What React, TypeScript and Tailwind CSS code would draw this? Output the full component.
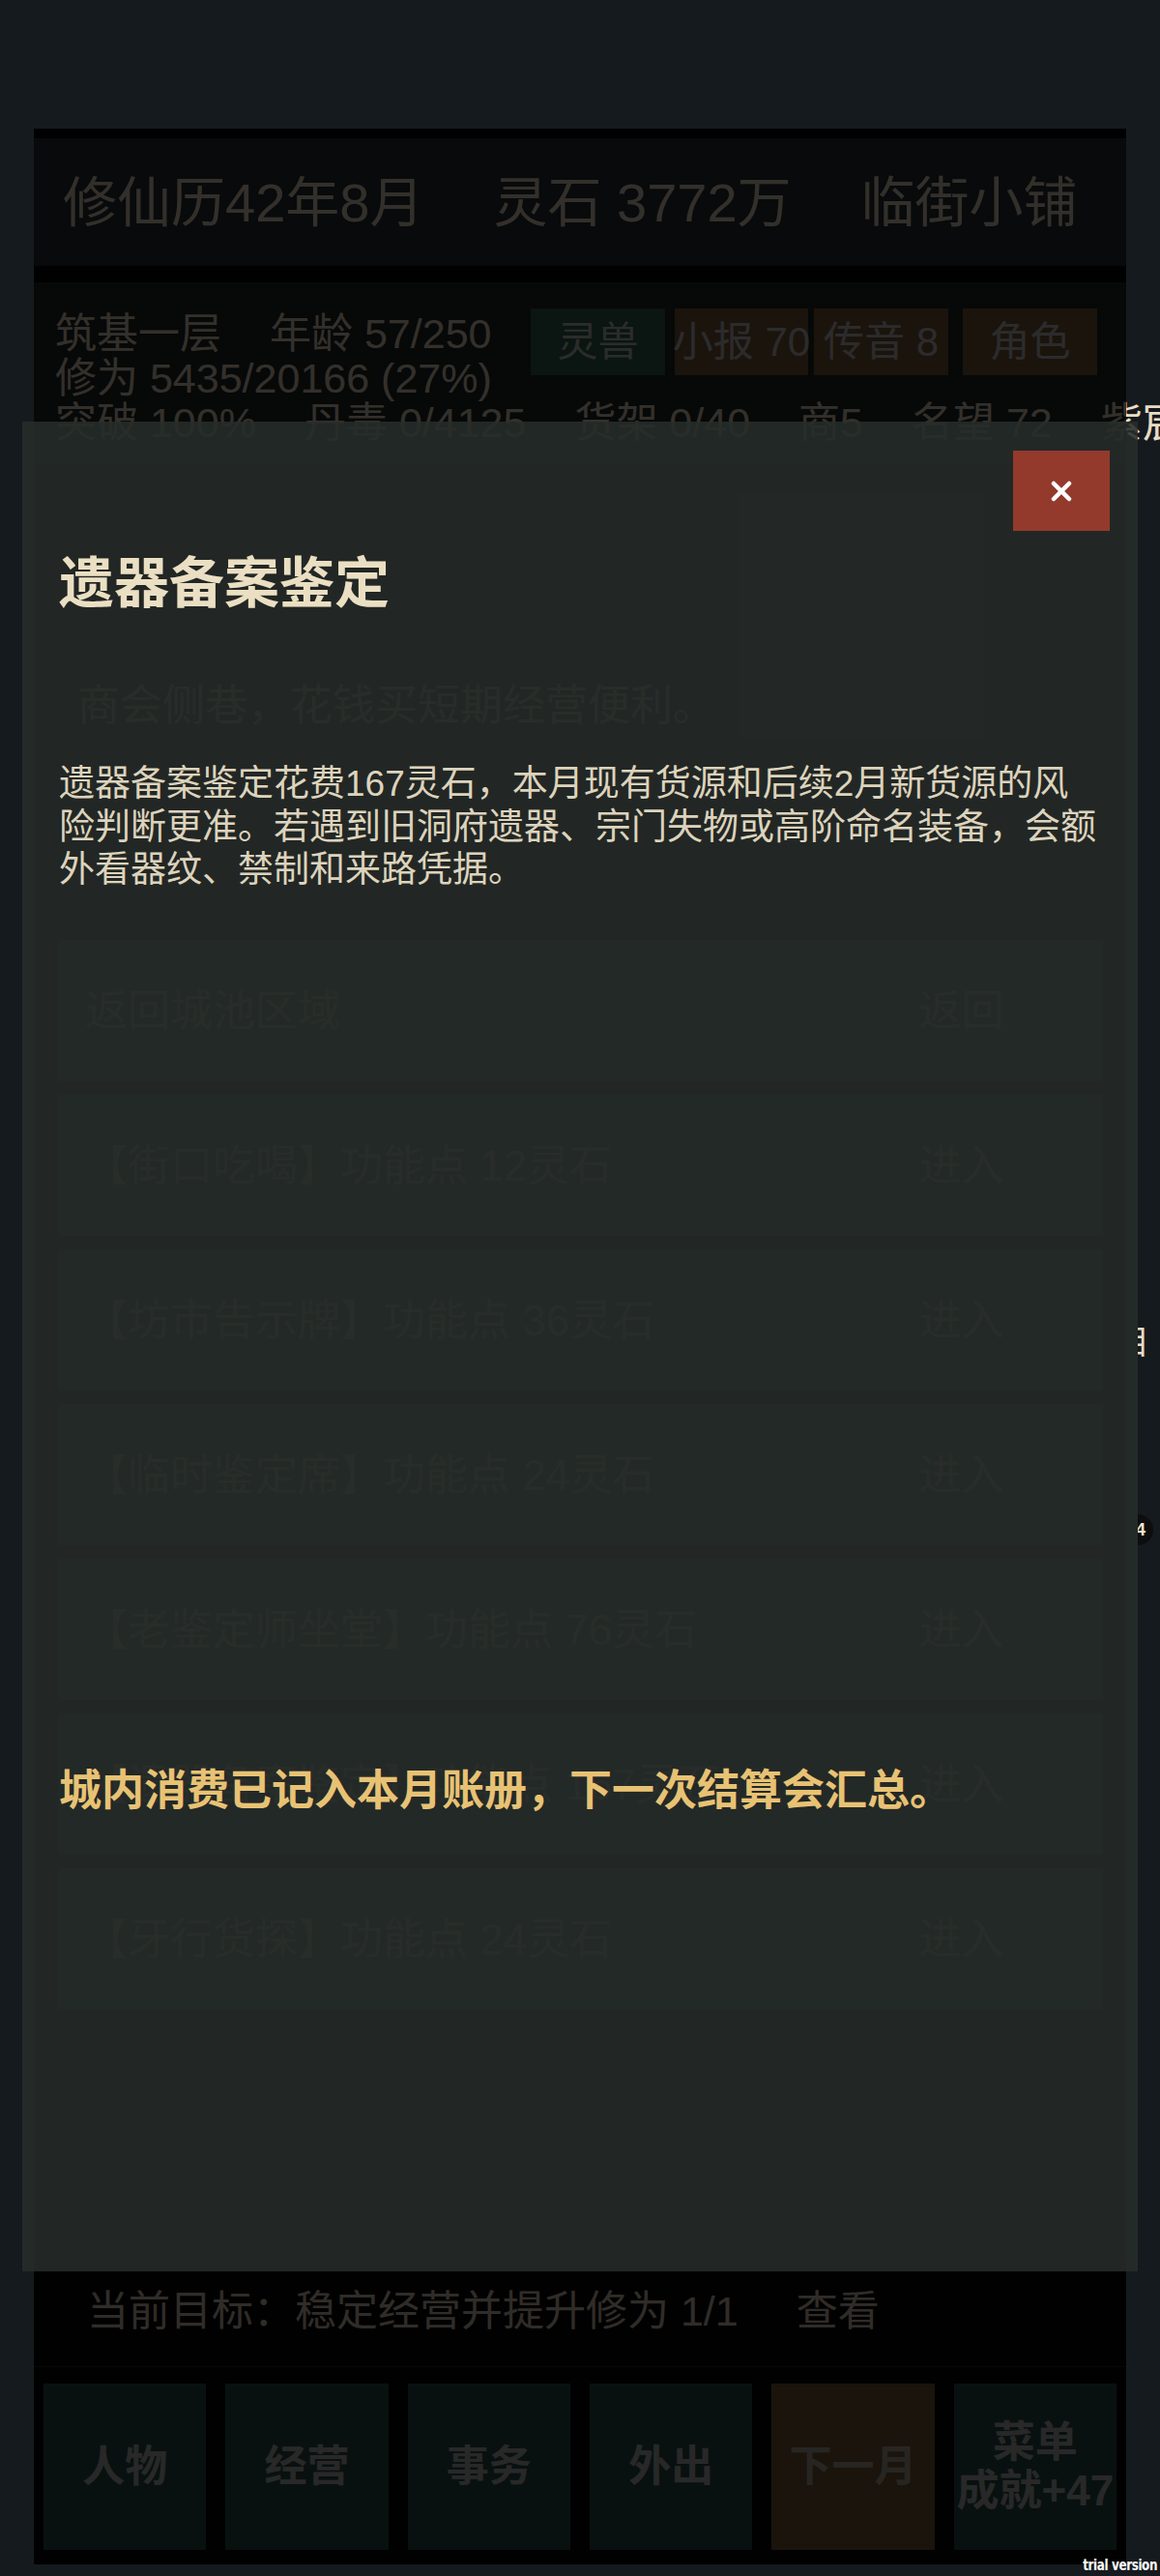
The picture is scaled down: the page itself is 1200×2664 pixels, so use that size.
import React from "react";

const rows = [
  { label: "返回城池区域", action: "返回" },
  { label: "【街口吃喝】功能点 12灵石", action: "进入" },
  { label: "【坊市告示牌】功能点 36灵石", action: "进入" },
  { label: "【临时鉴定席】功能点 24灵石", action: "进入" },
  { label: "【老鉴定师坐堂】功能点 76灵石", action: "进入" },
  { label: "【遗器备案鉴定】功能点 167灵石", action: "进入" },
  { label: "【牙行货探】功能点 24灵石", action: "进入" },
];

const stats = ["突破 100%", "丹毒 0/4125", "货架 0/40", "商5", "名望 72", "紫宸"];

export default function App() {
  return (
    <div className="relative w-[1200px] h-[2664px] overflow-hidden bg-[#151a1e] pt-[133px] font-['Liberation_Sans','Noto_Sans_CJK_SC',sans-serif]">
      {/* page under the dialog */}
      <div className="relative mx-[35px] h-[2519px] bg-[#080808] pt-[10px] flex flex-col">
        <header className="h-[132px] flex-none bg-[#283034] px-[30px] flex items-center gap-[72px] whitespace-nowrap text-[56px] leading-[67px] text-[#e8d4c0]">
          <span>修仙历42年8月</span>
          <span>灵石 3772万</span>
          <span>临街小铺</span>
        </header>

        <section className="mt-[17px] flex-none bg-[#202828] px-[22px] pt-[27px] pb-[20px] text-[43px] leading-[46px] text-[#e8dcc4]">
          <div className="flex items-start">
            <div className="mt-[3px] w-[470px] flex-none whitespace-nowrap">
              <div className="flex gap-[50px]">
                <span>筑基一层</span>
                <span>年龄 57/250</span>
              </div>
              <div>修为 5435/20166 (27%)</div>
            </div>
            <div className="ml-[22px] flex whitespace-nowrap text-[42px]">
              <div className="w-[139px] h-[69px] flex items-center justify-center bg-[#346050] text-[#c0c8c4]">
                灵兽
              </div>
              <div className="ml-[10px] w-[138px] h-[69px] flex items-center justify-center bg-[#785c3c] text-[#c8c4c8]">
                小报 70
              </div>
              <div className="ml-[6px] w-[139px] h-[69px] flex items-center justify-center bg-[#785c3c] text-[#c8c4c8]">
                传音 8
              </div>
              <div className="ml-[15px] w-[139px] h-[69px] flex items-center justify-center bg-[#785c3c] text-[#c8c4c8]">
                角色
              </div>
            </div>
          </div>
          <div className="flex gap-[50px] whitespace-nowrap">
            {stats.map((s) => (
              <span key={s}>{s}</span>
            ))}
          </div>
        </section>

        <div className="flex-1 px-[25px]">
          <p className="mt-[223px] pl-[20px] text-[44px] leading-[53px] text-[#e8dcc4] whitespace-nowrap">
            商会侧巷，花钱买短期经营便利。
          </p>
          <div className="mt-[216px] flex flex-col gap-[14px]">
            {rows.map((r) => (
              <div
                key={r.label}
                className="w-[1081px] h-[146px] flex items-center justify-between bg-[#3a4a4a] pl-[28px] pr-[30px] text-[44px] leading-[53px] text-[#e8dcc4] whitespace-nowrap"
              >
                <span>{r.label}</span>
                <span className="w-[233px] h-[82px] flex items-center justify-center bg-[#34484a]">
                  {r.action}
                </span>
              </div>
            ))}
          </div>
        </div>

        <div className="flex-none pt-[18px] pl-[55px] flex gap-[60px] whitespace-nowrap text-[43px] leading-[50px] text-[#d8c8b8]">
          <span>当前目标：稳定经营并提升修为 1/1</span>
          <span>查看</span>
        </div>
        <div className="mt-[32px] flex-none border-t border-dotted border-[#3c3c3c]" />

        <nav className="flex-none grid grid-cols-6 gap-[20px] px-[10px] pt-[17px] pb-[15px] text-[44px] leading-[50px] font-bold text-center">
          <div className="h-[172px] flex items-center justify-center bg-[#2c5048] text-[#b4b8b4]">人物</div>
          <div className="h-[172px] flex items-center justify-center bg-[#2c5048] text-[#b4b8b4]">经营</div>
          <div className="h-[172px] flex items-center justify-center bg-[#2c5048] text-[#b4b8b4]">事务</div>
          <div className="h-[172px] flex items-center justify-center bg-[#2c5048] text-[#b4b8b4]">外出</div>
          <div className="h-[172px] flex items-center justify-center bg-[#7c5c38] text-[#b0a89c]">下一月</div>
          <div className="h-[172px] flex flex-col items-center justify-center bg-[#2c5048] text-[#b4b8b4] whitespace-nowrap">
            <span>菜单</span>
            <span>成就+47</span>
          </div>
        </nav>

        {/* dim layer over the page */}
        <div className="absolute inset-0 z-10 bg-black/[0.78]" />
      </div>

      {/* side bits sticking out past the dialog */}
      <div className="absolute left-[1177px] top-[1371px] w-[8px] h-[36px] overflow-hidden">
        <span className="block -ml-[22px] text-[34px] leading-none text-[#e8dcc4]">目</span>
      </div>
      <div className="absolute left-[1177px] top-[1566px] w-[18px] h-[32px] overflow-hidden">
        <span className="block -ml-[20px] w-fit h-[32px] rounded-full bg-[#0c0e0f] px-[8px] text-[18px] leading-[32px] font-bold text-[#f0e6d0]">
          14
        </span>
      </div>

      {/* dialog */}
      <div className="absolute left-[23px] top-[436px] z-20 w-[1154px] h-[1913px] bg-[#272c2a]/[0.88] px-[38px] pt-[133px]">
        <button className="absolute right-[29px] top-[30px] w-[100px] h-[83px] flex items-center justify-center bg-[#933a2c]">
          <svg width="22" height="22" viewBox="0 0 22 22">
            <path d="M3 3L19 19M19 3L3 19" stroke="#ffffff" strokeWidth="4.5" strokeLinecap="round" />
          </svg>
        </button>
        <h2 className="text-[57px] leading-[68px] font-bold text-[#ebdfc3]">遗器备案鉴定</h2>
        <p className="mt-[152px] text-[37px] leading-[44.5px] text-[#ddd3bc]">
          遗器备案鉴定花费167灵石，本月现有货源和后续2月新货源的风险判断更准。若遇到旧洞府遗器、宗门失物或高阶命名装备，会额外看器纹、禁制和来路凭据。
        </p>
        <p className="mt-[902px] text-[44px] leading-[53px] font-bold text-[#e8c274]">
          城内消费已记入本月账册，下一次结算会汇总。
        </p>
      </div>

      <span className="absolute right-[3px] bottom-[3px] z-30 origin-right scale-x-[0.8] text-[15px] leading-none font-bold tracking-[-0.5px] text-white font-['DejaVu_Sans',sans-serif]">
        trial version
      </span>
    </div>
  );
}
